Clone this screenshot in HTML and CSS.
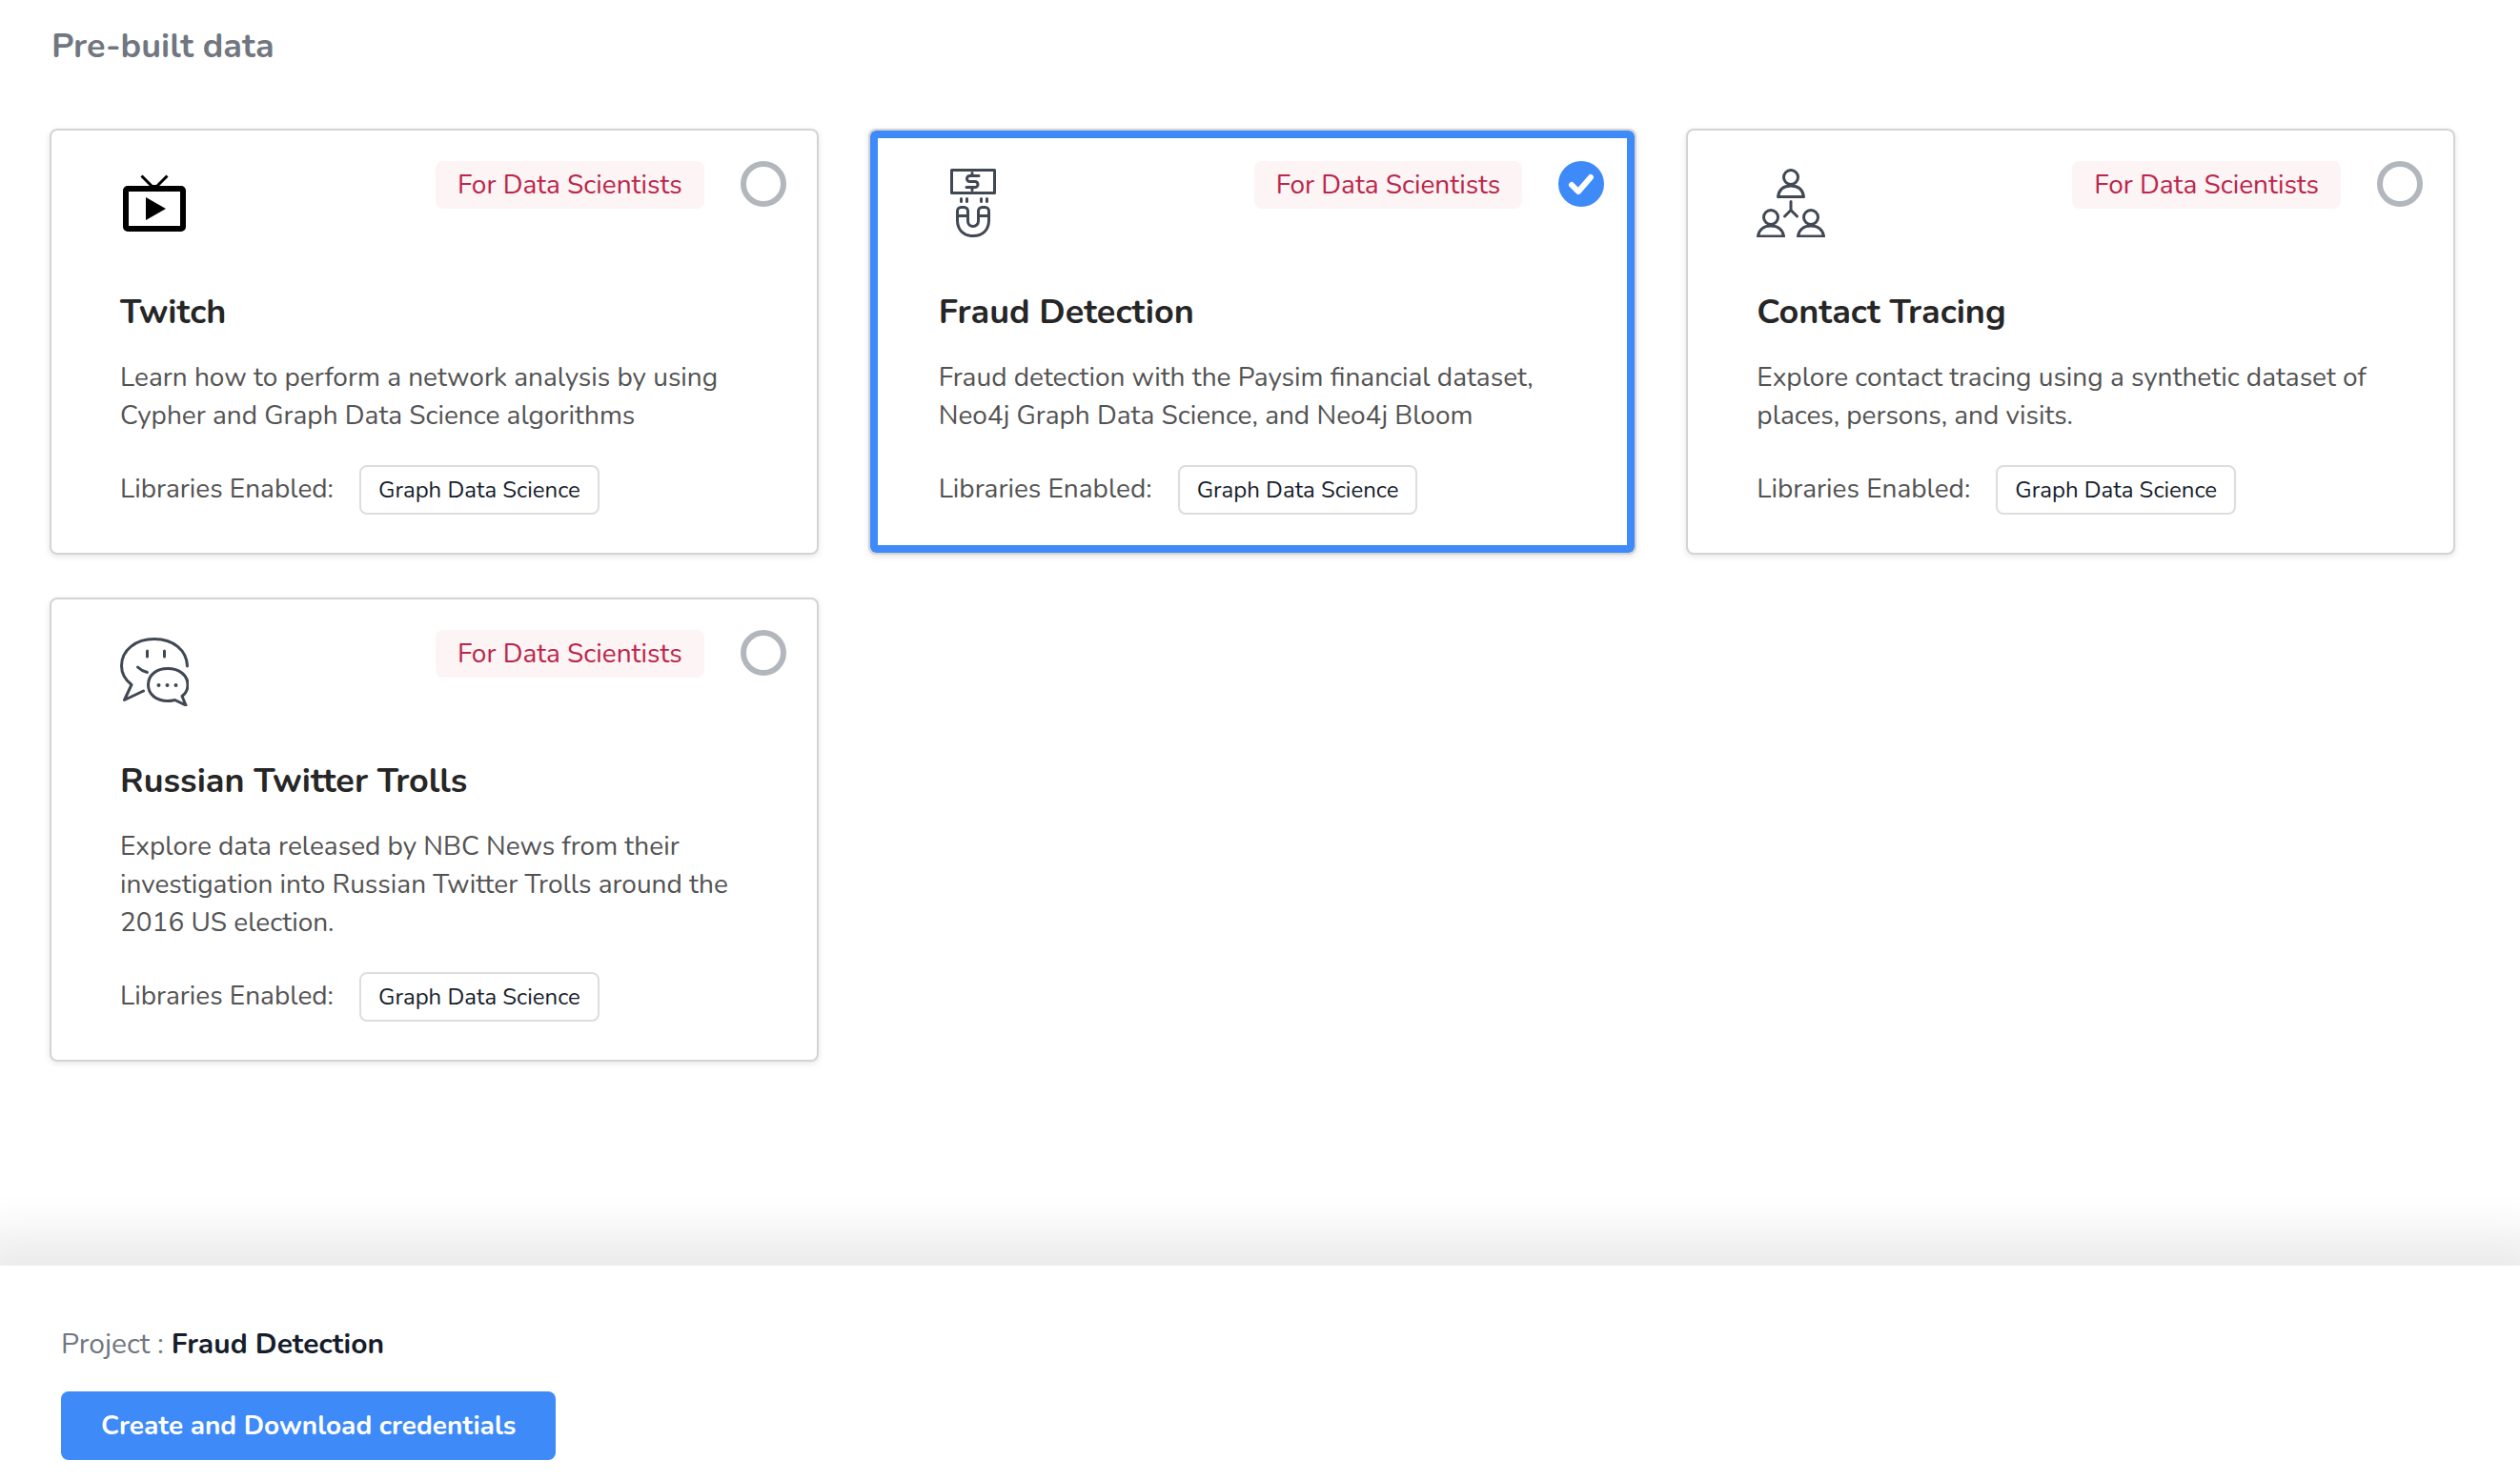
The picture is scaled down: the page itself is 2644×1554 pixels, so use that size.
FILE: index.html
```html
<!DOCTYPE html>
<html lang="en">
<head>
<meta charset="utf-8">
<meta name="viewport" content="width=device-width, initial-scale=1">
<title>Create project</title>
<link rel="stylesheet" href="styles.css">
</head>
<body>
<main class="content">
  <h2 class="section-title">Pre-built data</h2>
  <div class="cards">
    <article class="card">
      <div class="card-top">
        <svg class="icon" viewBox="0 0 72 72" aria-hidden="true">
          <path d="M22.500 7.500l11 11h5l11-11" fill="none" stroke="#000" stroke-width="3"/>
          <rect x="6" y="21" width="60" height="42" rx="2" fill="none" stroke="#000" stroke-width="6"/>
          <path d="M27 30v24l21-12z"/>
        </svg>
        <span class="badge">For Data Scientists</span>
        <input class="radio" type="radio" name="dataset" id="twitch">
      </div>
      <h3 class="card-title"><label for="twitch">Twitch</label></h3>
      <p class="card-text">Learn how to perform a network analysis by using Cypher and Graph Data Science algorithms</p>
      <div class="libraries"><span>Libraries Enabled:</span><span class="chip">Graph Data Science</span></div>
    </article>

    <article class="card selected">
      <div class="card-top">
        <svg class="icon line" viewBox="0 0 72 72" aria-hidden="true">
          <path d="M13.500 1.500h45v24h-45z"/>
          <path d="M42 7.500H32.500a3 3 0 0 0 0 6H38a3 3 0 0 1 0 6H29M35 4.500v3M35 19.500v3"/>
          <path d="M23.500 31.500v3M29.500 31.500v3M44.500 31.500v3M50.500 31.500v3"/>
          <path d="M19.500 44.500a4 4 0 0 1 4-4h3a4 4 0 0 1 4 4V55a5 5 0 0 0 11 0V44.500a4 4 0 0 1 4-4h3a4 4 0 0 1 4 4V54c0 10-6 16.500-16.500 16.500S19.500 64 19.500 54zM19.500 49.500h11M41.500 49.500h11"/>
        </svg>
        <span class="badge">For Data Scientists</span>
        <input class="radio" type="radio" name="dataset" id="fraud" checked>
      </div>
      <h3 class="card-title"><label for="fraud">Fraud Detection</label></h3>
      <p class="card-text">Fraud detection with the Paysim financial dataset, Neo4j Graph Data Science, and Neo4j Bloom</p>
      <div class="libraries"><span>Libraries Enabled:</span><span class="chip">Graph Data Science</span></div>
    </article>

    <article class="card">
      <div class="card-top">
        <svg class="icon line" viewBox="0 0 72 72" aria-hidden="true">
          <circle cx="36" cy="9" r="7.500"/>
          <path d="M22.500 29.500C23.500 22 28.500 18 36 18s12.500 4 13.500 11.500z"/>
          <path d="M36 34.500v9M29.500 50l6.500-6.500 6.500 6.500"/>
          <circle cx="15" cy="51" r="7.500"/>
          <path d="M1.500 71C2.500 64 7.500 60 15 60s12.500 4 13.500 11z"/>
          <circle cx="57" cy="51" r="7.500"/>
          <path d="M43.500 71C44.500 64 49.500 60 57 60s12.500 4 13.500 11z"/>
        </svg>
        <span class="badge">For Data Scientists</span>
        <input class="radio" type="radio" name="dataset" id="contact">
      </div>
      <h3 class="card-title"><label for="contact">Contact Tracing</label></h3>
      <p class="card-text">Explore contact tracing using a synthetic dataset of places, persons, and visits.</p>
      <div class="libraries"><span>Libraries Enabled:</span><span class="chip">Graph Data Science</span></div>
    </article>

    <article class="card">
      <div class="card-top">
        <svg class="icon line" viewBox="0 0 72 72" aria-hidden="true">
          <path d="M70.500 30C70 13 55.500 1.500 36 1.500S1.500 13 1.500 29.500c0 8 3.500 14.500 10.500 20L4.500 65.500l20-9.500"/>
          <path d="M28.500 14v6M46.500 14v6M18.500 31c2.500 2.500 6 4.500 10 5.500"/>
          <path d="M50 32.500c-12 0-20.500 7-20.500 17S38 66.500 50 66.500c3 0 5-.500 7.500-1L69 71l-4-9.500c4-3 6-7 6-12 0-10-9-17-21-17z"/>
          <path d="M40.500 50h.010M49.500 50h.010M58.500 50h.010" stroke-width="4"/>
        </svg>
        <span class="badge">For Data Scientists</span>
        <input class="radio" type="radio" name="dataset" id="trolls">
      </div>
      <h3 class="card-title"><label for="trolls">Russian Twitter Trolls</label></h3>
      <p class="card-text">Explore data released by NBC News from their investigation into Russian Twitter Trolls around the 2016 US election.</p>
      <div class="libraries"><span>Libraries Enabled:</span><span class="chip">Graph Data Science</span></div>
    </article>
  </div>
</main>
<footer class="footer">
  <p class="project">Project : <strong>Fraud Detection</strong></p>
  <button class="create" type="button">Create and Download credentials</button>
</footer>
</body>
</html>
```
FILE: styles.css
```css
* {
  box-sizing: border-box;
}

body {
  margin: 0;
  min-height: 100vh;
  display: flex;
  flex-direction: column;
  overflow-x: hidden;
  background: #fff;
  color: #535353;
  font: 28px/40px Nunito, Lato, "Open Sans", sans-serif;
}

h2, h3, p {
  margin: 0;
}

.content {
  flex: 1;
  padding: 25px 68px 64px 52px;
}

.section-title {
  margin: 0 2px 62px;
  color: #717780;
  font-size: 36px;
  line-height: 48px;
}

.cards {
  display: grid;
  grid-template-columns: repeat(3, 1fr);
  gap: 45px 52px;
  align-items: start;
}

.card {
  padding: 32px 32px 40px 72px;
  border: 2px solid #d4d4d4;
  border-radius: 8px;
  background: #fff;
  box-shadow: 0 2px 6px rgba(0, 0, 0, 0.1);
}

.card.selected {
  box-shadow: inset 0 0 0 8px #3d8af8, 0 2px 6px rgba(0, 0, 0, 0.1);
}

.card-top {
  display: flex;
  align-items: flex-start;
  margin-bottom: 55px;
}

.icon {
  width: 72px;
  height: 72px;
  margin: 8px auto 0 0;
}

.line {
  fill: none;
  stroke: #404854;
  stroke-width: 3;
  stroke-linecap: round;
  stroke-linejoin: round;
}

.badge {
  padding: 0 23px;
  border-radius: 8px;
  background: #fdf4f6;
  color: #bb2649;
  line-height: 50px;
}

.radio {
  appearance: none;
  width: 48px;
  height: 48px;
  margin: 0 0 0 38px;
  border: 6px solid #b2b7bd;
  border-radius: 50%;
  background: #fff;
}

.radio:checked {
  border: 0;
  background: #3d8af8 url("data:image/svg+xml,%3Csvg xmlns='http://www.w3.org/2000/svg' viewBox='0 0 48 48'%3E%3Cpath d='M14 25l7 7 13-15' fill='none' stroke='white' stroke-width='6' stroke-linecap='round' stroke-linejoin='round'/%3E%3C/svg%3E");
}

.card-title {
  margin-bottom: 24px;
  color: #262626;
  font-size: 36px;
  line-height: 48px;
}

.card-text {
  margin: 0 40px 32px 0;
}

.libraries {
  display: flex;
  align-items: baseline;
  gap: 27px;
}

.chip {
  padding: 0 18px;
  border: 2px solid #ddd;
  border-radius: 8px;
  color: #151d2b;
  font-size: 24px;
  line-height: 48px;
}

.footer {
  padding: 63px 64px 22px;
  background: #fff;
  box-shadow: 0 0 50px 30px rgba(0, 0, 0, 0.09);
}

.project {
  margin-bottom: 29px;
  color: #717780;
  font-size: 30px;
}

.project strong {
  color: #151d2b;
}

.create {
  padding: 0 42px;
  border: 0;
  border-radius: 8px;
  background: #3d8af8;
  color: #fff;
  font: bold 28px/72px Nunito, Lato, "Open Sans", sans-serif;
}
```
